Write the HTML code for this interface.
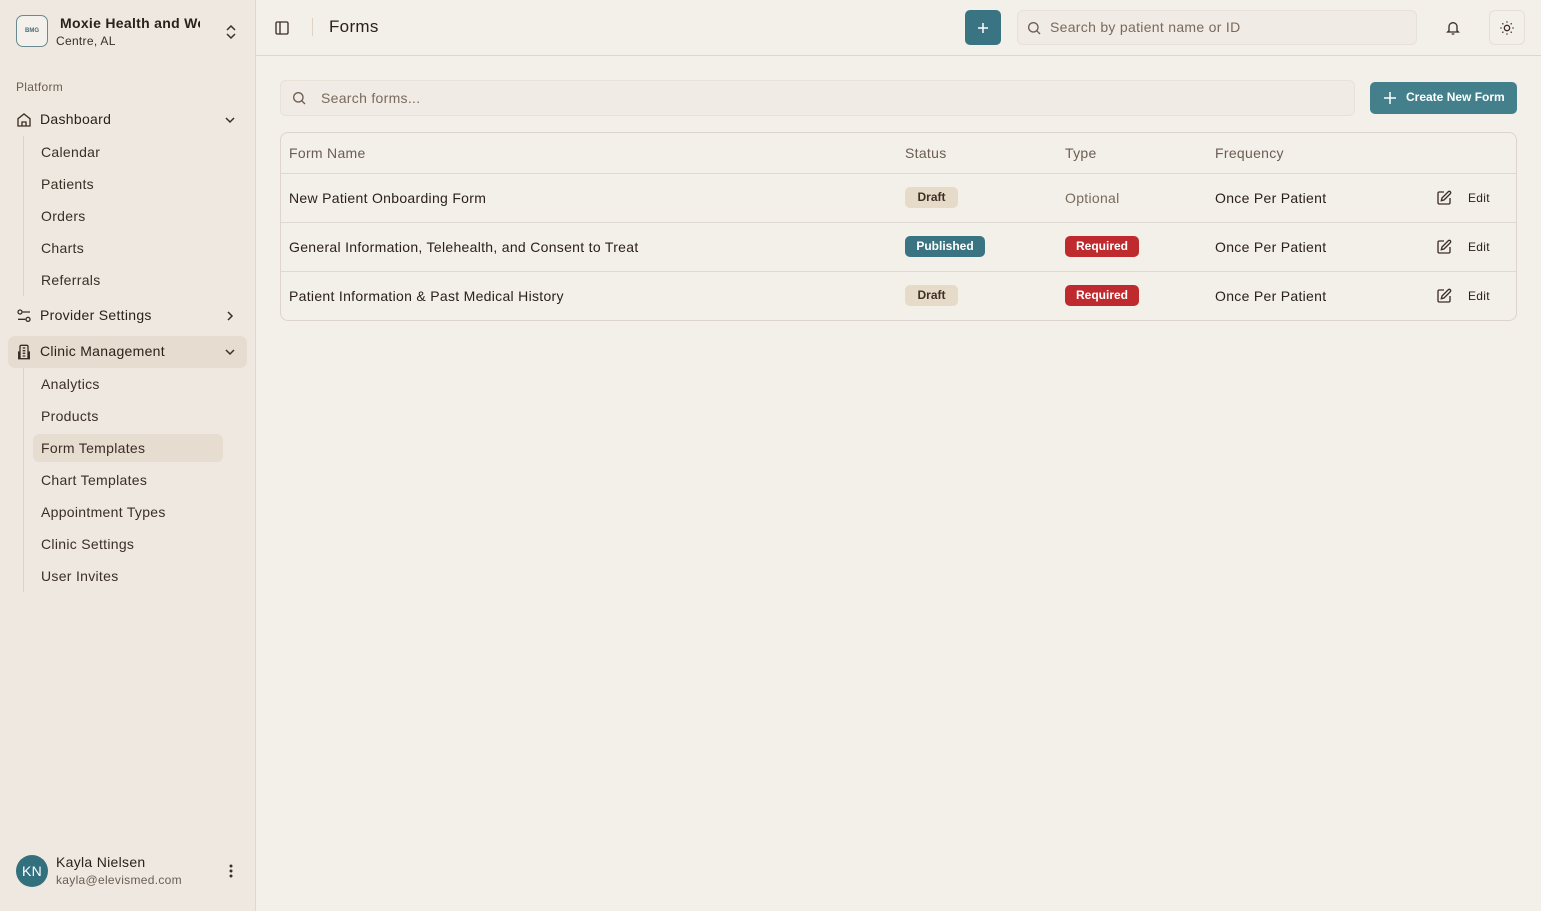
<!DOCTYPE html>
<html><head><meta charset="utf-8"><style>
*{box-sizing:border-box;margin:0;padding:0}
body{width:1541px;height:911px;font-family:"Liberation Sans",sans-serif;background:#f3efe9;color:#2b211b;position:relative;overflow:hidden;font-size:14px;letter-spacing:0.3px}
.sb{position:absolute;left:0;top:0;width:256px;height:911px;background:#efe8e0;border-right:1px solid #e0d8ce}
.logo{position:absolute;left:16px;top:15px;width:32px;height:32px;border:1px solid #6a8a90;border-radius:7px;background:#f4f1ec;font-size:6px;color:#4a6a72;text-align:center;line-height:30px;font-weight:bold;letter-spacing:0}
.t{position:absolute;white-space:nowrap}
.item{position:absolute;left:41px;font-size:14px;color:#3a2e26}
.sub-line{position:absolute;left:23px;width:1px;background:#ddd3c7}
.main{position:absolute;left:256px;top:0;right:0;bottom:0}
.hdr{position:absolute;left:0;right:0;top:0;height:56px;border-bottom:1px solid #ddd6cd}
svg{position:absolute}
.badge{position:absolute;height:21px;border-radius:5px;font-size:12px;font-weight:bold;line-height:21px;text-align:center;letter-spacing:0}
.draft{background:#e6dac9;color:#3e3026;width:53px}
.pub{background:#3a7482;color:#fff;width:80px}
.req{background:#bf2a2f;color:#fff;width:74px}
.row{position:absolute;left:281px;width:1235px;height:1px;background:#e0d9cf}
</style></head><body>
<div class="sb">
<div class="logo">BMG</div>
<div class="t" style="left:60px;top:15px;font-size:14px;font-weight:bold;width:140px;overflow:hidden">Moxie Health and Wellness</div>
<div class="t" style="left:56px;top:34px;font-size:12px;color:#3a2e26">Centre, AL</div>
<svg style="left:224px;top:24px" width="14" height="16" viewBox="0 0 14 16" fill="none" stroke="#3a2e26" stroke-width="1.5"><path d="M3 6l4-4 4 4M3 10l4 4 4-4"/></svg>
<div class="t" style="left:16px;top:80px;font-size:12px;color:#6b5d52">Platform</div>
<svg style="left:16px;top:112px" width="16" height="16" viewBox="0 0 24 24" fill="none" stroke="#3a2e26" stroke-width="2"><path d="M3 10l9-7 9 7v11H3z"/><path d="M9 21v-6h6v6"/></svg>
<div class="t" style="left:40px;top:111px;font-size:14px">Dashboard</div>
<svg style="left:224px;top:114px" width="12" height="12" viewBox="0 0 12 12" fill="none" stroke="#3a2e26" stroke-width="1.5"><path d="M2 4l4 4 4-4"/></svg>
<div class="sub-line" style="top:136px;height:160px"></div>
<div class="t item" style="top:144px">Calendar</div>
<div class="t item" style="top:176px">Patients</div>
<div class="t item" style="top:208px">Orders</div>
<div class="t item" style="top:240px">Charts</div>
<div class="t item" style="top:272px">Referrals</div>
<svg style="left:16px;top:308px" width="16" height="16" viewBox="0 0 24 24" fill="none" stroke="#3a2e26" stroke-width="2"><circle cx="6" cy="6" r="3"/><path d="M10 6h11M3 17h11"/><circle cx="18" cy="17" r="3"/></svg>
<div class="t" style="left:40px;top:307px;font-size:14px">Provider Settings</div>
<svg style="left:224px;top:310px" width="12" height="12" viewBox="0 0 12 12" fill="none" stroke="#3a2e26" stroke-width="1.5"><path d="M4 2l4 4-4 4"/></svg>
<div style="position:absolute;left:8px;top:336px;width:239px;height:32px;background:#e6dccf;border-radius:7px"></div>
<svg style="left:16px;top:344px" width="16" height="16" viewBox="0 0 24 24" fill="none" stroke="#3a2e26" stroke-width="2"><path d="M6 22V4a2 2 0 012-2h8a2 2 0 012 2v18zM6 12H4v10h16V12h-2M10 6h4M10 10h4M10 14h4M10 18h4"/></svg>
<div class="t" style="left:40px;top:343px;font-size:14px">Clinic Management</div>
<svg style="left:224px;top:346px" width="12" height="12" viewBox="0 0 12 12" fill="none" stroke="#3a2e26" stroke-width="1.5"><path d="M2 4l4 4 4-4"/></svg>
<div class="sub-line" style="top:368px;height:224px"></div>
<div class="t item" style="top:376px">Analytics</div>
<div class="t item" style="top:408px">Products</div>
<div style="position:absolute;left:33px;top:434px;width:190px;height:28px;background:#e6dccf;border-radius:6px"></div>
<div class="t item" style="top:440px">Form Templates</div>
<div class="t item" style="top:472px">Chart Templates</div>
<div class="t item" style="top:504px">Appointment Types</div>
<div class="t item" style="top:536px">Clinic Settings</div>
<div class="t item" style="top:568px">User Invites</div>
<div style="position:absolute;left:16px;top:855px;width:32px;height:32px;border-radius:50%;background:#33707e;color:#fff;font-size:14px;text-align:center;line-height:32px">KN</div>
<div class="t" style="left:56px;top:854px;font-size:14px">Kayla Nielsen</div>
<div class="t" style="left:56px;top:873px;font-size:12px;color:#6b5d52">kayla@elevismed.com</div>
<svg style="left:224px;top:863px" width="14" height="16" viewBox="0 0 14 16" fill="#3a2e26"><circle cx="7" cy="3" r="1.5"/><circle cx="7" cy="8" r="1.5"/><circle cx="7" cy="13" r="1.5"/></svg>
</div>
<div class="main">
<div class="hdr">
<svg style="left:18px;top:20px" width="16" height="16" viewBox="0 0 24 24" fill="none" stroke="#3a2e26" stroke-width="2"><rect x="3" y="3" width="18" height="18" rx="2"/><path d="M9 3v18"/></svg>
<div style="position:absolute;left:56px;top:18px;width:1px;height:18px;background:#ddd3c7"></div>
<div class="t" style="left:73px;top:17px;font-size:17px">Forms</div>
<div style="position:absolute;left:709px;top:10px;width:36px;height:35px;border-radius:5px;background:#3a7482"></div>
<svg style="left:720px;top:21px" width="14" height="14" viewBox="0 0 14 14" stroke="#fff" stroke-width="1.5"><path d="M7 2v10M2 7h10"/></svg>
<div style="position:absolute;left:761px;top:10px;width:400px;height:35px;border-radius:6px;background:#f0ebe4;border:1px solid #e8e1d8"></div>
<svg style="left:770px;top:20px" width="16" height="16" viewBox="0 0 24 24" fill="none" stroke="#6b5d52" stroke-width="2"><circle cx="11" cy="11" r="7"/><path d="M16 16l5 5"/></svg>
<div class="t" style="left:794px;top:19px;font-size:14px;color:#7a6a5e">Search by patient name or ID</div>
<svg style="left:1189px;top:19px" width="16" height="18" viewBox="0 0 24 24" fill="none" stroke="#3a2e26" stroke-width="2"><path d="M6 16V10a6 6 0 0112 0v6l2 2H4zM10 21h4"/></svg>
<div style="position:absolute;left:1233px;top:10px;width:36px;height:35px;border-radius:6px;border:1px solid #e6dfd6"></div>
<svg style="left:1243px;top:20px" width="16" height="16" viewBox="0 0 24 24" fill="none" stroke="#3a2e26" stroke-width="2"><circle cx="12" cy="12" r="4"/><path d="M12 2v2M12 20v2M2 12h2M20 12h2M5 5l1.5 1.5M17.5 17.5L19 19M5 19l1.5-1.5M17.5 6.5L19 5"/></svg>
</div>
<div style="position:absolute;left:24px;top:80px;width:1075px;height:36px;border-radius:6px;background:#f0ebe4;border:1px solid #e8e1d8"></div>
<svg style="left:35px;top:90px" width="16" height="16" viewBox="0 0 24 24" fill="none" stroke="#6b5d52" stroke-width="2"><circle cx="11" cy="11" r="7"/><path d="M16 16l5 5"/></svg>
<div class="t" style="left:65px;top:90px;font-size:14px;color:#7a6a5e">Search forms...</div>
<div style="position:absolute;left:1114px;top:82px;width:147px;height:32px;border-radius:5px;background:#43808c"></div>
<svg style="left:1127px;top:91px" width="14" height="14" viewBox="0 0 14 14" stroke="#fff" stroke-width="1.5"><path d="M7 1v12M1 7h12"/></svg>
<div class="t" style="left:1150px;top:90px;font-size:12px;font-weight:bold;color:#fff;letter-spacing:0">Create New Form</div>
</div>
<div style="position:absolute;left:280px;top:132px;width:1237px;height:189px;border:1px solid #ddd5cb;border-radius:8px"></div>
<div class="t" style="left:289px;top:145px;color:#6b5d52">Form Name</div>
<div class="t" style="left:905px;top:145px;color:#6b5d52">Status</div>
<div class="t" style="left:1065px;top:145px;color:#6b5d52">Type</div>
<div class="t" style="left:1215px;top:145px;color:#6b5d52">Frequency</div>
<div class="row" style="top:173px"></div>
<div class="row" style="top:222px"></div>
<div class="row" style="top:271px"></div>
<div class="t" style="left:289px;top:190px">New Patient Onboarding Form</div>
<div class="t" style="left:289px;top:239px">General Information, Telehealth, and Consent to Treat</div>
<div class="t" style="left:289px;top:288px">Patient Information &amp; Past Medical History</div>
<div class="badge draft" style="left:905px;top:187px">Draft</div>
<div class="badge pub" style="left:905px;top:236px">Published</div>
<div class="badge draft" style="left:905px;top:285px">Draft</div>
<div class="t" style="left:1065px;top:190px;color:#7a6a5e">Optional</div>
<div class="badge req" style="left:1065px;top:236px">Required</div>
<div class="badge req" style="left:1065px;top:285px">Required</div>
<div class="t" style="left:1215px;top:190px">Once Per Patient</div>
<div class="t" style="left:1215px;top:239px">Once Per Patient</div>
<div class="t" style="left:1215px;top:288px">Once Per Patient</div>
<svg style="left:1436px;top:190px" width="16" height="16" viewBox="0 0 24 24" fill="none" stroke="#3a2e26" stroke-width="2"><path d="M12 3H5a2 2 0 00-2 2v14a2 2 0 002 2h14a2 2 0 002-2v-7"/><path d="M18.4 2.6a2 2 0 013 3L12 15l-4 1 1-4z"/></svg>
<svg style="left:1436px;top:239px" width="16" height="16" viewBox="0 0 24 24" fill="none" stroke="#3a2e26" stroke-width="2"><path d="M12 3H5a2 2 0 00-2 2v14a2 2 0 002 2h14a2 2 0 002-2v-7"/><path d="M18.4 2.6a2 2 0 013 3L12 15l-4 1 1-4z"/></svg>
<svg style="left:1436px;top:288px" width="16" height="16" viewBox="0 0 24 24" fill="none" stroke="#3a2e26" stroke-width="2"><path d="M12 3H5a2 2 0 00-2 2v14a2 2 0 002 2h14a2 2 0 002-2v-7"/><path d="M18.4 2.6a2 2 0 013 3L12 15l-4 1 1-4z"/></svg>
<div class="t" style="left:1468px;top:191px;font-size:12px">Edit</div>
<div class="t" style="left:1468px;top:240px;font-size:12px">Edit</div>
<div class="t" style="left:1468px;top:289px;font-size:12px">Edit</div>
</body></html>
